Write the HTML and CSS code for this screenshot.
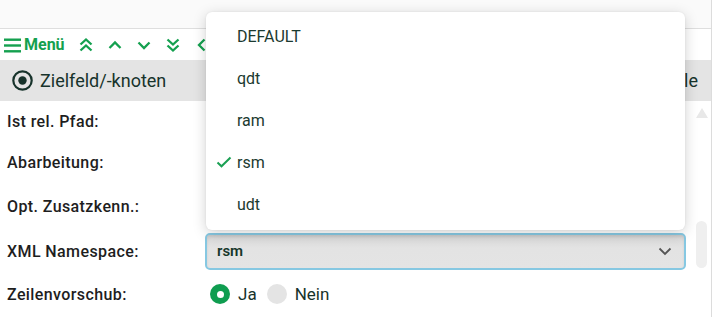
FILE: index.html
```html
<!DOCTYPE html>
<html lang="de">
<head>
<meta charset="utf-8">
<title>Namespace</title>
<link rel="stylesheet" href="styles.css">
</head>
<body>
<div class="app">
  <div class="main">
    <div class="topbar"></div>
    <div class="toolbar">
      <span class="menu">
        <svg class="burger" width="17" height="15" viewBox="0 0 17 15"><rect x="0" y="0.5" width="17" height="2.4" fill="currentColor"/><rect x="0" y="6.3" width="17" height="2.4" fill="currentColor"/><rect x="0" y="12.1" width="17" height="2.4" fill="currentColor"/></svg>
        Menü
      </span>
      <svg class="tb" width="16" height="16" viewBox="0 0 16 16"><path d="M2.5 7.5 L8 2.5 L13.5 7.5 M2.5 13.5 L8 8.5 L13.5 13.5" fill="none" stroke="currentColor" stroke-width="2.3"/></svg>
      <svg class="tb" width="16" height="16" viewBox="0 0 16 16"><path d="M2.5 11 L8 5.5 L13.5 11" fill="none" stroke="currentColor" stroke-width="2.3"/></svg>
      <svg class="tb" width="16" height="16" viewBox="0 0 16 16"><path d="M2.5 5.5 L8 11 L13.5 5.5" fill="none" stroke="currentColor" stroke-width="2.3"/></svg>
      <svg class="tb" width="16" height="16" viewBox="0 0 16 16"><path d="M2.5 2.5 L8 7.5 L13.5 2.5 M2.5 8.5 L8 13.5 L13.5 8.5" fill="none" stroke="currentColor" stroke-width="2.3"/></svg>
      <svg class="tb" width="16" height="16" viewBox="0 0 16 16"><path d="M10.5 2.5 L5 8 L10.5 13.5" fill="none" stroke="currentColor" stroke-width="2.3"/></svg>
    </div>
    <div class="header">
      <span class="hleft">
        <svg width="21" height="21" viewBox="0 0 21 21"><circle cx="10.5" cy="10.5" r="9.2" fill="none" stroke="#17332b" stroke-width="2.2"/><circle cx="10.5" cy="10.5" r="4.2" fill="#17332b"/></svg>
        Zielfeld/-knoten
      </span>
      <span class="hright">Quelle</span>
    </div>
    <div class="content">
      <div class="form">
        <div class="label r1">Ist rel. Pfad:</div><div class="value r1"></div>
        <div class="label r2">Abarbeitung:</div><div class="value r2"></div>
        <div class="label r3">Opt. Zusatzkenn.:</div><div class="value r3"></div>
        <div class="label r4">XML Namespace:</div>
        <div class="value r4">
          <div class="select">
            <span>rsm</span>
            <svg width="14" height="9" viewBox="0 0 14 9"><path d="M1.5 1.5 L7 7 L12.5 1.5" fill="none" stroke="#555" stroke-width="1.8"/></svg>
          </div>
        </div>
        <div class="label r5">Zeilenvorschub:</div>
        <div class="value r5 radios">
          <span class="radio on"></span><span class="rtext">Ja</span>
          <span class="radio off"></span><span class="rtext">Nein</span>
        </div>
      </div>
      <div class="scrollbar">
        <div class="sarrow"></div>
        <div class="sthumb"></div>
      </div>
    </div>
  </div>
  <div class="dropdown">
    <div class="item"><span class="chk"></span>DEFAULT</div>
    <div class="item"><span class="chk"></span>qdt</div>
    <div class="item"><span class="chk"></span>ram</div>
    <div class="item"><span class="chk"><svg width="16" height="12" viewBox="0 0 16 12"><path d="M1.5 6.5 L5.5 10.3 L14.5 1.5" fill="none" stroke="#1aa053" stroke-width="2"/></svg></span>rsm</div>
    <div class="item"><span class="chk"></span>udt</div>
  </div>
</div>
</body>
</html>
```

FILE: styles.css
```css
* { box-sizing: border-box; }
html, body { margin: 0; padding: 0; }
body {
  width: 714px;
  height: 317px;
  overflow: hidden;
  background: #fff;
  font-family: Roboto, "Liberation Sans", sans-serif;
}
.app {
  position: relative;
  width: 714px;
  height: 317px;
}
.main {
  width: 712px;
  height: 317px;
  border-right: 1px solid #dcdcdc;
  display: flex;
  flex-direction: column;
}
.topbar {
  height: 29px;
  flex: none;
  background: #fafafa;
  border-bottom: 1px solid #dedede;
}
.toolbar {
  height: 31px;
  flex: none;
  display: flex;
  align-items: center;
  padding-left: 4px;
  color: #14a04f;
}
.menu {
  display: flex;
  align-items: center;
  gap: 3px;
  font-weight: 700;
  font-size: 16px;
  margin-right: 13px;
}
.burger { margin-top: 1px; }
.tb { margin-right: 13px; flex: none; }
.header {
  height: 41px;
  flex: none;
  background: #e4e4e4;
  display: flex;
  align-items: center;
  justify-content: space-between;
  padding: 0 13px 0 12px;
  font-size: 18px;
  color: #17332b;
}
.hleft {
  display: flex;
  align-items: center;
  gap: 7px;
}
.content {
  flex: 1;
  display: flex;
}
.form {
  display: grid;
  grid-template-columns: 205px 481px;
  grid-template-rows: 41px 41px 46px 44px 42px;
  align-items: center;
}
.label {
  padding-left: 7px;
  font-size: 16px;
  font-weight: 500;
  letter-spacing: 0.4px;
  color: #1e1e1e;
}
.select {
  height: 37px;
  border: 2px solid #86c8e2;
  border-radius: 5px;
  background: linear-gradient(#d9d9d9, #e3e3e3 40%, #e4e4e4);
  box-shadow: inset 0 2px 3px rgba(0,0,0,0.08);
  display: flex;
  align-items: center;
  justify-content: space-between;
  padding: 0 12px 0 10px;
  font-size: 15px;
  font-weight: 600;
  color: #17372b;
}
.radios {
  display: flex;
  align-items: center;
  padding-left: 5px;
  font-size: 17px;
  color: #17332b;
}
.radio {
  width: 20px;
  height: 20px;
  border-radius: 50%;
  flex: none;
}
.radio.on {
  background: #0f9d50;
  display: flex;
  align-items: center;
  justify-content: center;
}
.radio.on::after {
  content: "";
  width: 7px;
  height: 7px;
  border-radius: 50%;
  background: #fff;
}
.radio.off { background: #e4e4e4; }
.rtext { margin: 0 10px 0 8px; }
.scrollbar {
  margin-left: auto;
  margin-right: 4px;
  width: 11px;
  display: flex;
  flex-direction: column;
  align-items: center;
}
.sarrow {
  margin-top: 7px;
  width: 0;
  height: 0;
  border-left: 6px solid transparent;
  border-right: 6px solid transparent;
  border-bottom: 10px solid #e8e8e8;
}
.sthumb {
  margin-top: 103px;
  width: 11px;
  height: 47px;
  border-radius: 6px;
  background: #efefef;
}
.dropdown {
  position: absolute;
  left: 206px;
  top: 12px;
  width: 479px;
  height: 218px;
  background: #fff;
  border-radius: 6px;
  box-shadow: 0 3px 14px rgba(0,0,0,0.18), 0 0 2px rgba(0,0,0,0.08);
  padding-top: 3px;
}
.item {
  height: 42px;
  display: flex;
  align-items: center;
  font-size: 16px;
  color: #1b3a30;
}
.chk {
  width: 31px;
  flex: none;
  display: flex;
  padding-left: 10px;
}
```
